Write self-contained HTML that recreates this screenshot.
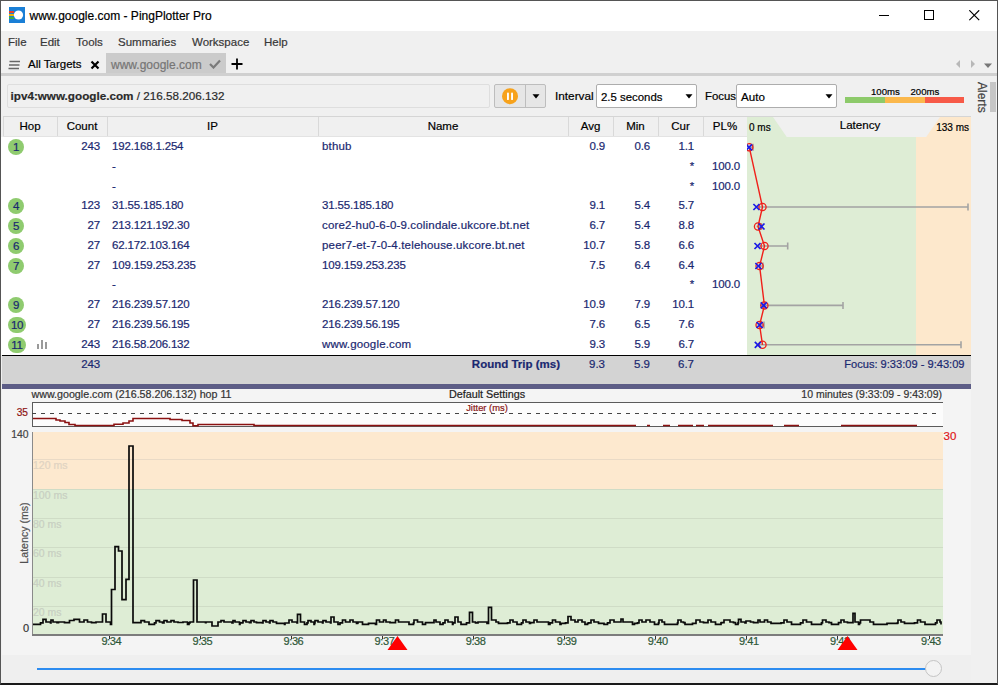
<!DOCTYPE html>
<html><head><meta charset="utf-8"><style>
html,body{margin:0;padding:0;width:998px;height:685px;overflow:hidden;background:#f0f0f0}
body{position:relative;font-family:"Liberation Sans", sans-serif}
.t{position:absolute;line-height:20px;white-space:nowrap;-webkit-text-stroke:0.2px currentColor}
</style></head><body>
<div style="position:absolute;left:0px;top:0px;width:998px;height:685px;background:#f0f0f0"></div><div style="position:absolute;left:0px;top:0px;width:998px;height:31px;background:#fff"></div><svg style="position:absolute;left:9px;top:7px" width="16" height="16" viewBox="0 0 16 16">
<rect width="16" height="16" fill="#1a7fd6"/>
<rect x="0" y="4" width="5" height="2" fill="#e8412c"/>
<rect x="0" y="7" width="5" height="2" fill="#f5b400"/>
<rect x="0" y="10" width="5" height="2" fill="#3fae49"/>
<circle cx="9.5" cy="8" r="4.6" fill="#fff"/>
</svg><div class="t" style="left:29.5px;top:6px;font-size:12px;color:#000;font-weight:normal;">www.google.com - PingPlotter Pro</div><div style="position:absolute;left:879px;top:15px;width:10px;height:1px;background:#000"></div><div style="position:absolute;left:924px;top:10px;width:8px;height:8px;border:1px solid #000"></div><svg style="position:absolute;left:969px;top:10px" width="11" height="11" viewBox="0 0 11 11"><path d="M0.3 0.3L10.2 10.2M10.2 0.3L0.3 10.2" stroke="#000" stroke-width="1.2"/></svg><div class="t" style="left:8px;top:32px;font-size:11.5px;color:#383838;font-weight:normal;">File</div><div class="t" style="left:40px;top:32px;font-size:11.5px;color:#383838;font-weight:normal;">Edit</div><div class="t" style="left:76px;top:32px;font-size:11.5px;color:#383838;font-weight:normal;">Tools</div><div class="t" style="left:118px;top:32px;font-size:11.5px;color:#383838;font-weight:normal;">Summaries</div><div class="t" style="left:192px;top:32px;font-size:11.5px;color:#383838;font-weight:normal;">Workspace</div><div class="t" style="left:264px;top:32px;font-size:11.5px;color:#383838;font-weight:normal;">Help</div><svg style="position:absolute;left:8px;top:60px" width="13" height="10" viewBox="0 0 13 10"><path d="M1.5 1.5H12M1 5H11.5M0.5 8.5H11" stroke="#666" stroke-width="1.3"/></svg><div class="t" style="left:28px;top:54px;font-size:11.5px;color:#000;font-weight:normal;">All Targets</div><svg style="position:absolute;left:90px;top:60px" width="10" height="10" viewBox="0 0 10 10"><path d="M1.5 1.5L8.5 8.5M8.5 1.5L1.5 8.5" stroke="#000" stroke-width="2.2"/></svg><div style="position:absolute;left:106px;top:53px;width:120px;height:20px;background:#cbcbcb"></div><div class="t" style="left:111px;top:55px;font-size:12px;color:#767676;font-weight:normal;">www.google.com</div><svg style="position:absolute;left:209px;top:59px" width="12" height="10" viewBox="0 0 12 10"><path d="M1 5L4.5 8.5L11 1.5" stroke="#7a7a7a" stroke-width="2.2" fill="none"/></svg><svg style="position:absolute;left:231px;top:58px" width="12" height="12" viewBox="0 0 12 12"><path d="M6 0.5V11.5M0.5 6H11.5" stroke="#000" stroke-width="1.8"/></svg><svg style="position:absolute;left:953px;top:59px" width="40" height="10" viewBox="0 0 40 10"><path d="M7 1L3 5L7 9Z" fill="#b8b8b8"/><path d="M18 1L22 5L18 9Z" fill="#b8b8b8"/><path d="M31 4.5H39L35 9Z" fill="#777"/></svg><div style="position:absolute;left:1px;top:73px;width:996px;height:3px;background:#d0d0d0"></div><div style="position:absolute;left:7px;top:84px;width:483px;height:24px;background:#f0f0f0;border:1px solid #dedede;box-sizing:border-box;border-radius:2px"></div><div class="t" style="left:10.5px;top:86px;font-size:11.7px;color:#2a2a2a;font-weight:normal;"><b>ipv4:www.google.com</b> / 216.58.206.132</div><div style="position:absolute;left:494px;top:84px;width:52px;height:24px;background:#e6e6e6;border:1px solid #bdbdbd;box-sizing:border-box;border-radius:2px"></div><div style="position:absolute;left:525px;top:85px;width:1px;height:22px;background:#bdbdbd"></div><svg style="position:absolute;left:501px;top:88px" width="18" height="18" viewBox="0 0 18 18"><circle cx="9" cy="8.2" r="8" fill="#f7a21b"/><rect x="6" y="4.5" width="1.9" height="7.6" rx="0.9" fill="#fff"/><rect x="10.1" y="4.5" width="1.9" height="7.6" rx="0.9" fill="#fff"/></svg><svg style="position:absolute;left:532px;top:94px" width="8" height="5" viewBox="0 0 8 5"><path d="M0.5 0.3H7.5L4 4.5Z" fill="#000"/></svg><div class="t" style="left:555px;top:86px;font-size:11.8px;color:#000;font-weight:normal;">Interval</div><div style="position:absolute;left:596px;top:84px;width:101px;height:24px;background:#fff;border:1px solid #adadad;box-sizing:border-box;border-radius:2px"></div><div class="t" style="left:601px;top:87px;font-size:11.4px;color:#000;font-weight:normal;">2.5 seconds</div><svg style="position:absolute;left:684.5px;top:94px" width="8" height="5" viewBox="0 0 8 5"><path d="M0.5 0.3H7.5L4 4.5Z" fill="#000"/></svg><div class="t" style="left:705px;top:86px;font-size:11.4px;color:#000;font-weight:normal;">Focus</div><div style="position:absolute;left:736px;top:84px;width:101px;height:24px;background:#fff;border:1px solid #adadad;box-sizing:border-box;border-radius:2px"></div><div class="t" style="left:741px;top:87px;font-size:11.6px;color:#000;font-weight:normal;">Auto</div><svg style="position:absolute;left:824.5px;top:94px" width="8" height="5" viewBox="0 0 8 5"><path d="M0.5 0.3H7.5L4 4.5Z" fill="#000"/></svg><div style="position:absolute;left:845px;top:97px;width:40px;height:6px;background:#8dca6a"></div><div style="position:absolute;left:885px;top:97px;width:40px;height:6px;background:#fbb84c"></div><div style="position:absolute;left:925px;top:97px;width:39px;height:6px;background:#f75a48"></div><div class="t" style="left:871px;top:82px;font-size:9.6px;color:#000;font-weight:normal;">100ms</div><div class="t" style="left:910.5px;top:82px;font-size:9.6px;color:#000;font-weight:normal;">200ms</div><div style="position:absolute;left:971px;top:76px;width:26px;height:607px;background:#f0f0f0"></div><div style="position:absolute;left:990px;top:82px;width:6px;height:30px;background:#c6c6c6"></div><div class="t" style="left:969px;top:82px;font-size:12px;color:#444;transform-origin:0 0;transform:translate(22.5px,0) rotate(90deg)">Alerts</div><div style="position:absolute;left:3px;top:116px;width:968px;height:1px;background:#d5d5d5"></div><div style="position:absolute;left:3px;top:117px;width:968px;height:20px;background:#f0f0f0"></div><div style="position:absolute;left:3px;top:136px;width:968px;height:1px;background:#e3e3e3"></div><div style="position:absolute;left:57px;top:117px;width:1px;height:19px;background:#d9d9d9"></div><div style="position:absolute;left:107px;top:117px;width:1px;height:19px;background:#d9d9d9"></div><div style="position:absolute;left:318px;top:117px;width:1px;height:19px;background:#d9d9d9"></div><div style="position:absolute;left:568px;top:117px;width:1px;height:19px;background:#d9d9d9"></div><div style="position:absolute;left:613px;top:117px;width:1px;height:19px;background:#d9d9d9"></div><div style="position:absolute;left:658px;top:117px;width:1px;height:19px;background:#d9d9d9"></div><div style="position:absolute;left:703px;top:117px;width:1px;height:19px;background:#d9d9d9"></div><div style="position:absolute;left:747px;top:117px;width:1px;height:19px;background:#d9d9d9"></div><div style="position:absolute;left:3px;top:117px;width:1px;height:19px;background:#d9d9d9"></div><div class="t" style="left:-120.0px;width:300px;text-align:center;top:116px;font-size:11.5px;color:#000;font-weight:normal;">Hop</div><div class="t" style="left:-68.0px;width:300px;text-align:center;top:116px;font-size:11.5px;color:#000;font-weight:normal;">Count</div><div class="t" style="left:62.5px;width:300px;text-align:center;top:116px;font-size:11.5px;color:#000;font-weight:normal;">IP</div><div class="t" style="left:293.0px;width:300px;text-align:center;top:116px;font-size:11.5px;color:#000;font-weight:normal;">Name</div><div class="t" style="left:440.5px;width:300px;text-align:center;top:116px;font-size:11.5px;color:#000;font-weight:normal;">Avg</div><div class="t" style="left:485.5px;width:300px;text-align:center;top:116px;font-size:11.5px;color:#000;font-weight:normal;">Min</div><div class="t" style="left:530.5px;width:300px;text-align:center;top:116px;font-size:11.5px;color:#000;font-weight:normal;">Cur</div><div class="t" style="left:575.0px;width:300px;text-align:center;top:116px;font-size:11.5px;color:#000;font-weight:normal;">PL%</div><div style="position:absolute;left:1px;top:137px;width:746px;height:218px;background:#fff"></div><div style="position:absolute;left:747px;top:117px;width:224px;height:238px;background:#deedd5"></div><div style="position:absolute;left:916px;top:117px;width:55px;height:238px;background:#fde8cc"></div><svg style="position:absolute;left:747px;top:117px" width="224" height="20" viewBox="0 0 224 20"><path d="M26 0H193L179 20.3H40Z" fill="#f0f0f0"/></svg><div class="t" style="left:749px;top:118px;font-size:10px;color:#000;font-weight:normal;">0 ms</div><div class="t" style="left:710px;width:300px;text-align:center;top:115px;font-size:11.6px;color:#000;font-weight:normal;">Latency</div><div class="t" style="right:29px;top:118px;font-size:10px;color:#000;font-weight:normal;">133 ms</div><div style="position:absolute;left:8.0px;top:139px;width:16px;height:16px;background:#8fcb6f;border-radius:8px"></div><div class="t" style="left:-134px;width:300px;text-align:center;top:137px;font-size:11.5px;color:#1a2870;font-weight:normal;letter-spacing:-0.3px">1</div><div class="t" style="right:898px;top:136.4px;font-size:11.5px;color:#1a2870;font-weight:normal;letter-spacing:-0.17px">243</div><div class="t" style="left:112px;top:136.4px;font-size:11.5px;color:#1a2870;font-weight:normal;letter-spacing:-0.17px">192.168.1.254</div><div class="t" style="left:322px;top:136.4px;font-size:11.5px;color:#1a2870;font-weight:normal;letter-spacing:0.17px">bthub</div><div class="t" style="right:393px;top:136.4px;font-size:11.5px;color:#1a2870;font-weight:normal;letter-spacing:-0.17px">0.9</div><div class="t" style="right:348px;top:136.4px;font-size:11.5px;color:#1a2870;font-weight:normal;letter-spacing:-0.17px">0.6</div><div class="t" style="right:304px;top:136.4px;font-size:11.5px;color:#1a2870;font-weight:normal;letter-spacing:-0.17px">1.1</div><div class="t" style="left:112px;top:156.4px;font-size:11.5px;color:#1a2870;font-weight:normal;letter-spacing:-0.17px">-</div><div class="t" style="right:304px;top:156.4px;font-size:11.5px;color:#1a2870;font-weight:normal;letter-spacing:-0.17px">*</div><div class="t" style="right:258px;top:156.4px;font-size:11.5px;color:#1a2870;font-weight:normal;letter-spacing:-0.17px">100.0</div><div class="t" style="left:112px;top:176.4px;font-size:11.5px;color:#1a2870;font-weight:normal;letter-spacing:-0.17px">-</div><div class="t" style="right:304px;top:176.4px;font-size:11.5px;color:#1a2870;font-weight:normal;letter-spacing:-0.17px">*</div><div class="t" style="right:258px;top:176.4px;font-size:11.5px;color:#1a2870;font-weight:normal;letter-spacing:-0.17px">100.0</div><div style="position:absolute;left:8.0px;top:198px;width:16px;height:16px;background:#8fcb6f;border-radius:8px"></div><div class="t" style="left:-134px;width:300px;text-align:center;top:196px;font-size:11.5px;color:#1a2870;font-weight:normal;letter-spacing:-0.3px">4</div><div class="t" style="right:898px;top:195.4px;font-size:11.5px;color:#1a2870;font-weight:normal;letter-spacing:-0.17px">123</div><div class="t" style="left:112px;top:195.4px;font-size:11.5px;color:#1a2870;font-weight:normal;letter-spacing:-0.17px">31.55.185.180</div><div class="t" style="left:322px;top:195.4px;font-size:11.5px;color:#1a2870;font-weight:normal;letter-spacing:-0.17px">31.55.185.180</div><div class="t" style="right:393px;top:195.4px;font-size:11.5px;color:#1a2870;font-weight:normal;letter-spacing:-0.17px">9.1</div><div class="t" style="right:348px;top:195.4px;font-size:11.5px;color:#1a2870;font-weight:normal;letter-spacing:-0.17px">5.4</div><div class="t" style="right:304px;top:195.4px;font-size:11.5px;color:#1a2870;font-weight:normal;letter-spacing:-0.17px">5.7</div><div style="position:absolute;left:8.0px;top:218px;width:16px;height:16px;background:#8fcb6f;border-radius:8px"></div><div class="t" style="left:-134px;width:300px;text-align:center;top:216px;font-size:11.5px;color:#1a2870;font-weight:normal;letter-spacing:-0.3px">5</div><div class="t" style="right:898px;top:215.4px;font-size:11.5px;color:#1a2870;font-weight:normal;letter-spacing:-0.17px">27</div><div class="t" style="left:112px;top:215.4px;font-size:11.5px;color:#1a2870;font-weight:normal;letter-spacing:-0.17px">213.121.192.30</div><div class="t" style="left:322px;top:215.4px;font-size:11.5px;color:#1a2870;font-weight:normal;letter-spacing:0.17px">core2-hu0-6-0-9.colindale.ukcore.bt.net</div><div class="t" style="right:393px;top:215.4px;font-size:11.5px;color:#1a2870;font-weight:normal;letter-spacing:-0.17px">6.7</div><div class="t" style="right:348px;top:215.4px;font-size:11.5px;color:#1a2870;font-weight:normal;letter-spacing:-0.17px">5.4</div><div class="t" style="right:304px;top:215.4px;font-size:11.5px;color:#1a2870;font-weight:normal;letter-spacing:-0.17px">8.8</div><div style="position:absolute;left:8.0px;top:238px;width:16px;height:16px;background:#8fcb6f;border-radius:8px"></div><div class="t" style="left:-134px;width:300px;text-align:center;top:236px;font-size:11.5px;color:#1a2870;font-weight:normal;letter-spacing:-0.3px">6</div><div class="t" style="right:898px;top:235.4px;font-size:11.5px;color:#1a2870;font-weight:normal;letter-spacing:-0.17px">27</div><div class="t" style="left:112px;top:235.4px;font-size:11.5px;color:#1a2870;font-weight:normal;letter-spacing:-0.17px">62.172.103.164</div><div class="t" style="left:322px;top:235.4px;font-size:11.5px;color:#1a2870;font-weight:normal;letter-spacing:0.17px">peer7-et-7-0-4.telehouse.ukcore.bt.net</div><div class="t" style="right:393px;top:235.4px;font-size:11.5px;color:#1a2870;font-weight:normal;letter-spacing:-0.17px">10.7</div><div class="t" style="right:348px;top:235.4px;font-size:11.5px;color:#1a2870;font-weight:normal;letter-spacing:-0.17px">5.8</div><div class="t" style="right:304px;top:235.4px;font-size:11.5px;color:#1a2870;font-weight:normal;letter-spacing:-0.17px">6.6</div><div style="position:absolute;left:8.0px;top:258px;width:16px;height:16px;background:#8fcb6f;border-radius:8px"></div><div class="t" style="left:-134px;width:300px;text-align:center;top:256px;font-size:11.5px;color:#1a2870;font-weight:normal;letter-spacing:-0.3px">7</div><div class="t" style="right:898px;top:255.4px;font-size:11.5px;color:#1a2870;font-weight:normal;letter-spacing:-0.17px">27</div><div class="t" style="left:112px;top:255.4px;font-size:11.5px;color:#1a2870;font-weight:normal;letter-spacing:-0.17px">109.159.253.235</div><div class="t" style="left:322px;top:255.4px;font-size:11.5px;color:#1a2870;font-weight:normal;letter-spacing:-0.17px">109.159.253.235</div><div class="t" style="right:393px;top:255.4px;font-size:11.5px;color:#1a2870;font-weight:normal;letter-spacing:-0.17px">7.5</div><div class="t" style="right:348px;top:255.4px;font-size:11.5px;color:#1a2870;font-weight:normal;letter-spacing:-0.17px">6.4</div><div class="t" style="right:304px;top:255.4px;font-size:11.5px;color:#1a2870;font-weight:normal;letter-spacing:-0.17px">6.4</div><div class="t" style="left:112px;top:274.4px;font-size:11.5px;color:#1a2870;font-weight:normal;letter-spacing:-0.17px">-</div><div class="t" style="right:304px;top:274.4px;font-size:11.5px;color:#1a2870;font-weight:normal;letter-spacing:-0.17px">*</div><div class="t" style="right:258px;top:274.4px;font-size:11.5px;color:#1a2870;font-weight:normal;letter-spacing:-0.17px">100.0</div><div style="position:absolute;left:8.0px;top:297px;width:16px;height:16px;background:#8fcb6f;border-radius:8px"></div><div class="t" style="left:-134px;width:300px;text-align:center;top:295px;font-size:11.5px;color:#1a2870;font-weight:normal;letter-spacing:-0.3px">9</div><div class="t" style="right:898px;top:294.4px;font-size:11.5px;color:#1a2870;font-weight:normal;letter-spacing:-0.17px">27</div><div class="t" style="left:112px;top:294.4px;font-size:11.5px;color:#1a2870;font-weight:normal;letter-spacing:-0.17px">216.239.57.120</div><div class="t" style="left:322px;top:294.4px;font-size:11.5px;color:#1a2870;font-weight:normal;letter-spacing:-0.17px">216.239.57.120</div><div class="t" style="right:393px;top:294.4px;font-size:11.5px;color:#1a2870;font-weight:normal;letter-spacing:-0.17px">10.9</div><div class="t" style="right:348px;top:294.4px;font-size:11.5px;color:#1a2870;font-weight:normal;letter-spacing:-0.17px">7.9</div><div class="t" style="right:304px;top:294.4px;font-size:11.5px;color:#1a2870;font-weight:normal;letter-spacing:-0.17px">10.1</div><div style="position:absolute;left:8.0px;top:317px;width:18px;height:16px;background:#8fcb6f;border-radius:8px"></div><div class="t" style="left:-133px;width:300px;text-align:center;top:315px;font-size:11.5px;color:#1a2870;font-weight:normal;letter-spacing:-0.3px">10</div><div class="t" style="right:898px;top:314.4px;font-size:11.5px;color:#1a2870;font-weight:normal;letter-spacing:-0.17px">27</div><div class="t" style="left:112px;top:314.4px;font-size:11.5px;color:#1a2870;font-weight:normal;letter-spacing:-0.17px">216.239.56.195</div><div class="t" style="left:322px;top:314.4px;font-size:11.5px;color:#1a2870;font-weight:normal;letter-spacing:-0.17px">216.239.56.195</div><div class="t" style="right:393px;top:314.4px;font-size:11.5px;color:#1a2870;font-weight:normal;letter-spacing:-0.17px">7.6</div><div class="t" style="right:348px;top:314.4px;font-size:11.5px;color:#1a2870;font-weight:normal;letter-spacing:-0.17px">6.5</div><div class="t" style="right:304px;top:314.4px;font-size:11.5px;color:#1a2870;font-weight:normal;letter-spacing:-0.17px">7.6</div><div style="position:absolute;left:8.0px;top:337px;width:18px;height:16px;background:#8fcb6f;border-radius:8px"></div><div class="t" style="left:-133px;width:300px;text-align:center;top:335px;font-size:11.5px;color:#1a2870;font-weight:normal;letter-spacing:-0.3px">11</div><div class="t" style="right:898px;top:334.4px;font-size:11.5px;color:#1a2870;font-weight:normal;letter-spacing:-0.17px">243</div><div class="t" style="left:112px;top:334.4px;font-size:11.5px;color:#1a2870;font-weight:normal;letter-spacing:-0.17px">216.58.206.132</div><div class="t" style="left:322px;top:334.4px;font-size:11.5px;color:#1a2870;font-weight:normal;letter-spacing:0.17px">www.google.com</div><div class="t" style="right:393px;top:334.4px;font-size:11.5px;color:#1a2870;font-weight:normal;letter-spacing:-0.17px">9.3</div><div class="t" style="right:348px;top:334.4px;font-size:11.5px;color:#1a2870;font-weight:normal;letter-spacing:-0.17px">5.9</div><div class="t" style="right:304px;top:334.4px;font-size:11.5px;color:#1a2870;font-weight:normal;letter-spacing:-0.17px">6.7</div><div style="position:absolute;left:37px;top:344px;width:2px;height:5px;background:#9a9a9a"></div><div style="position:absolute;left:41px;top:340px;width:2px;height:9px;background:#9a9a9a"></div><div style="position:absolute;left:45px;top:342px;width:2px;height:7px;background:#9a9a9a"></div><svg style="position:absolute;left:747px;top:137px" width="224" height="218" viewBox="747 137 224 218"><g stroke="#a3a3a3" stroke-width="1.6" fill="none"><path d="M748.0 147.3H753.0M753.0 143.8V150.8"/><path d="M756.1 207.0H968.0M968.0 203.5V210.5"/><path d="M756.5 226.5H761.5M761.5 223.0V230.0"/><path d="M756.8 246.0H787.7M787.7 242.5V249.5"/><path d="M757.3 266.0H763.0M763.0 262.5V269.5"/><path d="M760.0 305.4H843.0M843.0 301.9V308.9"/><path d="M757.5 325.0H764.0M764.0 321.5V328.5"/><path d="M756.9 344.8H961.0M961.0 341.3V348.3"/></g><path d="M749.3 147.3L762.5 207.0L758.0 226.5L764.5 246.0L759.6 266.0L764.4 305.4L759.6 325.0L762.5 344.8" stroke="#f0201a" stroke-width="1.4" fill="none"/><g stroke="#f0201a" stroke-width="1.3" fill="none"><circle cx="749.3" cy="147.3" r="3.6"/><circle cx="762.5" cy="207.0" r="3.6"/><circle cx="758.0" cy="226.5" r="3.6"/><circle cx="764.5" cy="246.0" r="3.6"/><circle cx="759.6" cy="266.0" r="3.6"/><circle cx="764.4" cy="305.4" r="3.6"/><circle cx="759.6" cy="325.0" r="3.6"/><circle cx="762.5" cy="344.8" r="3.6"/></g><g stroke="#1a1ae6" stroke-width="1.7" fill="none"><path d="M746.0 144.3l6 6m0 -6l-6 6"/><path d="M753.4 204.0l6 6m0 -6l-6 6"/><path d="M758.5 223.5l6 6m0 -6l-6 6"/><path d="M754.5 243.0l6 6m0 -6l-6 6"/><path d="M755.4 263.0l6 6m0 -6l-6 6"/><path d="M760.7 302.4l6 6m0 -6l-6 6"/><path d="M756.6 322.0l6 6m0 -6l-6 6"/><path d="M754.8 341.8l6 6m0 -6l-6 6"/></g></svg><div style="position:absolute;left:2px;top:355px;width:969px;height:1px;background:#000"></div><div style="position:absolute;left:2px;top:356px;width:969px;height:28px;background:#d3d3d3"></div><div class="t" style="right:898px;top:354px;font-size:11.5px;color:#1a2870;font-weight:normal;letter-spacing:-0.17px">243</div><div class="t" style="right:438px;top:354px;font-size:11.5px;color:#1a2870;font-weight:bold;">Round Trip (ms)</div><div class="t" style="right:393px;top:354px;font-size:11.5px;color:#1a2870;font-weight:normal;">9.3</div><div class="t" style="right:348px;top:354px;font-size:11.5px;color:#1a2870;font-weight:normal;">5.9</div><div class="t" style="right:304px;top:354px;font-size:11.5px;color:#1a2870;font-weight:normal;">6.7</div><div class="t" style="right:33.5px;top:354px;font-size:11.1px;color:#1a2870;font-weight:normal;">Focus: 9:33:09 - 9:43:09</div><div style="position:absolute;left:2px;top:384px;width:969px;height:5px;background:#5d5d86"></div><div style="position:absolute;left:2px;top:389px;width:969px;height:266px;background:#f4f4f4"></div><div style="position:absolute;left:2px;top:655px;width:969px;height:28px;background:#efefef"></div><div class="t" style="left:31.5px;top:384px;font-size:10.7px;color:#333;font-weight:normal;">www.google.com (216.58.206.132) hop 11</div><div class="t" style="left:337px;width:300px;text-align:center;top:384px;font-size:10.8px;color:#222;font-weight:normal;">Default Settings</div><div class="t" style="right:56px;top:384px;font-size:10.5px;color:#333;font-weight:normal;">10 minutes (9:33:09 - 9:43:09)</div><div style="position:absolute;left:32px;top:402px;width:911px;height:25px;background:#fcfcfc;border:1px solid #5b5b5b;border-right:none;box-sizing:border-box"></div><div class="t" style="right:970px;top:403px;font-size:10.2px;color:#8e1212;font-weight:normal;">35</div><svg style="position:absolute;left:32px;top:402px" width="911" height="25" viewBox="32 402 911 25"><path d="M32 413.5H941" stroke="#444" stroke-width="1" stroke-dasharray="4 5"/><path d="M33 418.5H56V420H60V421H65V422.5H69V424.5H75V425.5H114V424.3H123V423H129V421H133V418.5H170V419.5H182V420.5H190V423H193V425.8H198V424.5H254V425.5H636M647 425.5H650M663 425.5H670M678 425.5H693M696 425.5H704M708 425.5H773M784 425.5H799M841 425.5H917" stroke="#8b1111" stroke-width="1.6" fill="none"/></svg><div class="t" style="left:337px;width:300px;text-align:center;top:398px;font-size:9.4px;color:#8a1515;font-weight:normal;">Jitter (ms)</div><div style="position:absolute;left:32px;top:432px;width:911px;height:57px;background:#fde9cf"></div><div style="position:absolute;left:32px;top:489px;width:911px;height:146px;background:#deedd5"></div><div style="position:absolute;left:32px;top:606.0px;width:911px;height:1px;background:#cfdcc6"></div><div class="t" style="left:33px;top:602.16px;font-size:10.5px;color:#c8cfc2;font-weight:normal;">20 ms</div><div style="position:absolute;left:32px;top:576.6px;width:911px;height:1px;background:#cfdcc6"></div><div class="t" style="left:33px;top:572.8199999999999px;font-size:10.5px;color:#c8cfc2;font-weight:normal;">40 ms</div><div style="position:absolute;left:32px;top:547.3px;width:911px;height:1px;background:#cfdcc6"></div><div class="t" style="left:33px;top:543.48px;font-size:10.5px;color:#c8cfc2;font-weight:normal;">60 ms</div><div style="position:absolute;left:32px;top:517.9px;width:911px;height:1px;background:#cfdcc6"></div><div class="t" style="left:33px;top:514.14px;font-size:10.5px;color:#c8cfc2;font-weight:normal;">80 ms</div><div style="position:absolute;left:32px;top:488.6px;width:911px;height:1px;background:#cfdcc6"></div><div class="t" style="left:33px;top:484.7999999999999px;font-size:10.5px;color:#c8cfc2;font-weight:normal;">100 ms</div><div style="position:absolute;left:32px;top:459.3px;width:911px;height:1px;background:#e9dac6"></div><div class="t" style="left:33px;top:455.4599999999999px;font-size:10.5px;color:#e0d3c2;font-weight:normal;">120 ms</div><div style="position:absolute;left:32px;top:432px;width:1px;height:203px;background:#8a8a8a"></div><div style="position:absolute;left:32px;top:634px;width:911px;height:2px;background:#7c7c7c"></div><div class="t" style="right:969.5px;top:424.5px;font-size:10.4px;color:#444;font-weight:normal;">140</div><div class="t" style="right:969px;top:618px;font-size:11px;color:#333;font-weight:normal;">0</div><div class="t" style="left:943.5px;top:426px;font-size:11.5px;color:#e01515;font-weight:normal;">30</div><div class="t" style="left:14px;top:533px;font-size:10.6px;color:#505050;width:100px;text-align:center;transform-origin:0 0;transform:translate(0px,50px) rotate(-90deg)">Latency (ms)</div><svg style="position:absolute;left:32px;top:430px" width="910" height="205" viewBox="32 430 910 205"><path d="M33 624.3H40.5V622.8H43.0V619.3H46.0V622.0H50.5V622.8H51.0V620H53.0V622.0H57.0V622.6H58.5V622H64.5V622.6H69.5V620.5H74.0V619.3H79.5V622.0H84.0V620H87.5V622.0H91.5V622.6H96.0V622H102.5V614H106.0V622.0H110.5V624.3H111.5V589.5H115.0V546.6H118.5V551H122.0V599.6H126.0V579.4H129.0V446H133.0V622.6H141.0V620.6H144.5V622.0H149.0V624.3H154.5V622.8H156.0V620.6H159.5V622.0H162.5V622.8H164.0V620.6H167.0V622.0H171.0V620.6H174.0V622.0H178.0V622.5H183.0V622.0H187.5V624.3H189.0V622.8H190.0V622H193.5V580H197.0V622H205.5V622.6H206.0V622H212.0V626H218.0V622.0H221.0V620.6H224.0V622H232.0V622.8H233.0V620.6H235.0V622.0H239.5V624.3H240.0V622.8H242.5V622.6H243.0V620.6H246.0V622.0H249.5V622.6H251.0V620.6H254.0V622.0H256.5V622.6H262.5V622.8H263.0V620.6H266.0V622.0H269.5V622.8H270.0V620.6H273.0V622.0H276.5V623.3H284.5V624.3H285.0V623H289.0V620H292.0V622.0H297.0V622.8H297.5V614.4H300.5V622.0H304.5V624.3H307.0V622.8H308.0V620.6H311.0V622.0H314.0V624.3H314.5V622.8H315.0V620.6H318.0V622.0H322.5V622.8H323.0V620.6H326.0V622.0H330.5V622.8H331.0V617H334.0V622.0H338.0V624.3H340.0V622.8H342.5V620H345.5V622.0H350.0V620H353.0V622.0H356.5V623.3H357.5V622.8H358.0V622H362.5V624.3H368.5V623.3H375.5V624.3H376.5V620H379.5V622.0H383.5V620H386.0V622.0H390.0V622.6H395.5V620H398.5V622H409.0V624.3H413.5V622.8H414.0V620H417.5V622.0H422.5V624.3H425.5V622.6H434.0V620H436.0V622.0H440.0V624.3H443.0V622.8H445.0V620H448.0V622.0H452.5V624.3H453.0V622.8H455.0V617H458.0V622.0H461.0V624.3H466.5V622.8H469.5V612.4H472.5V622.0H475.5V622.8H478.0V622H487.0V623.3H488.5V607.4H491.5V620H496.0V622.0H498.5V623.3H507.5V622.8H510.0V620H513.0V622.0H517.0V624.3H521.5V622.8H523.0V620H526.0V622.0H529.5V623.3H530.5V622.6H534.0V620H537.0V622H548.5V624.3H550.0V622.8H552.5V620H555.5V622.0H560.0V624.3H561.0V623.3H565.5V622.8H568.0V616.5H571.0V620H575.0V622.0H578.0V620H582.0V622.0H585.0V624.3H587.5V623.3H588.5V622.8H591.0V620H594.0V622.0H598.5V623.3H604.0V624.3H607.5V622.8H610.0V620H614.0V622H621.0V619H623.0V622H632.5V624.3H634.5V623.3H637.5V622.8H639.0V620H642.0V622.0H646.0V620H650.0V622.0H654.5V624.3H658.5V622.8H659.0V620H662.0V622.0H664.5V624.3H677.5V622.8H678.0V620H681.0V622.0H683.5V622.6H685.0V624.3H692.5V623.3H696.0V620H700.0V622.0H703.5V622.6H708.0V620H711.0V622.0H715.5V624.3H721.0V622.8H721.5V622.6H724.0V620H730.0V622.0H733.5V622.6H735.5V624.3H738.0V622.8H738.5V619.3H741.0V622.0H745.0V622.8H746.0V621H750.5V622.0H753.5V622.6H758.0V620H760.0V622.0H764.5V620H767.5V622.0H771.0V623.3H781.0V622.8H784.0V620H787.0V622.0H791.5V624.3H800.5V622.8H803.0V620H806.5V622.0H811.5V624.3H821.5V622.8H822.5V620H826.0V622.0H829.0V622.6H831.5V624.3H838.5V622.6H841.0V620H844.0V622.0H847.5V622.6H853.0V613.3H855.0V622.0H858.5V624.3H859.5V622.8H860.5V620H870.0V622.0H873.5V624.3H887.0V623.3H897.5V622.8H898.0V620H901.0V622.0H904.5V623.3H914.5V622.8H917.5V620H920.5V622.0H925.0V624.3H935.5V622.8H937.0V620H940.0V622.0H941.0V624.5H941" stroke="#0a0a0a" stroke-width="1.7" fill="none" stroke-linejoin="miter"/></svg><div style="position:absolute;left:109px;top:636px;width:1px;height:3px;background:#333"></div><div class="t" style="left:101.4px;top:631px;font-size:11px;color:#2e5838;font-weight:normal;letter-spacing:-0.4px">9:34</div><div style="position:absolute;left:200px;top:636px;width:1px;height:3px;background:#333"></div><div class="t" style="left:192.47px;top:631px;font-size:11px;color:#2e5838;font-weight:normal;letter-spacing:-0.4px">9:35</div><div style="position:absolute;left:291px;top:636px;width:1px;height:3px;background:#333"></div><div class="t" style="left:283.53999999999996px;top:631px;font-size:11px;color:#2e5838;font-weight:normal;letter-spacing:-0.4px">9:36</div><div style="position:absolute;left:382px;top:636px;width:1px;height:3px;background:#333"></div><div class="t" style="left:374.61px;top:631px;font-size:11px;color:#2e5838;font-weight:normal;letter-spacing:-0.4px">9:37</div><div style="position:absolute;left:473px;top:636px;width:1px;height:3px;background:#333"></div><div class="t" style="left:465.67999999999995px;top:631px;font-size:11px;color:#2e5838;font-weight:normal;letter-spacing:-0.4px">9:38</div><div style="position:absolute;left:564px;top:636px;width:1px;height:3px;background:#333"></div><div class="t" style="left:556.75px;top:631px;font-size:11px;color:#2e5838;font-weight:normal;letter-spacing:-0.4px">9:39</div><div style="position:absolute;left:655px;top:636px;width:1px;height:3px;background:#333"></div><div class="t" style="left:647.8199999999999px;top:631px;font-size:11px;color:#2e5838;font-weight:normal;letter-spacing:-0.4px">9:40</div><div style="position:absolute;left:746px;top:636px;width:1px;height:3px;background:#333"></div><div class="t" style="left:738.89px;top:631px;font-size:11px;color:#2e5838;font-weight:normal;letter-spacing:-0.4px">9:41</div><div style="position:absolute;left:837px;top:636px;width:1px;height:3px;background:#333"></div><div class="t" style="left:829.9599999999999px;top:631px;font-size:11px;color:#2e5838;font-weight:normal;letter-spacing:-0.4px">9:42</div><div style="position:absolute;left:929px;top:636px;width:1px;height:3px;background:#333"></div><div class="t" style="left:921.0299999999999px;top:631px;font-size:11px;color:#2e5838;font-weight:normal;letter-spacing:-0.4px">9:43</div><svg style="position:absolute;left:387px;top:636px" width="22" height="15" viewBox="0 0 22 15"><path d="M10.5 0L20.5 14H0.5Z" fill="#f00"/></svg><svg style="position:absolute;left:837px;top:636px" width="22" height="15" viewBox="0 0 22 15"><path d="M10.5 0L20.5 14H0.5Z" fill="#f00"/></svg><div style="position:absolute;left:37px;top:668px;width:890px;height:2px;background:#2d8cf0"></div><div style="position:absolute;left:925px;top:660px;width:17px;height:17px;background:#f3f3f3;border:1px solid #c4c4c4;border-radius:50%;box-sizing:border-box"></div><div style="position:absolute;left:0px;top:0px;width:998px;height:685px;border:1px solid #555;border-bottom:2px solid #1a1a1a;border-right-color:#555;box-sizing:border-box;pointer-events:none"></div>
</body></html>
